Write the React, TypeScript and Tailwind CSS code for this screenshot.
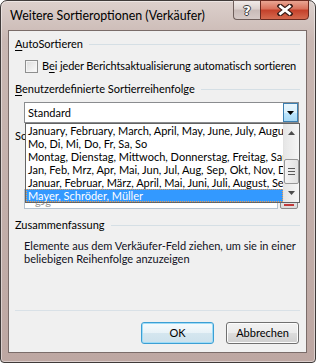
import React from "react";

const font = { fontFamily: 'Lato, "Noto Sans", sans-serif' };

function SectionHeader({ children }: { children: React.ReactNode }) {
  return (
    <div className="flex items-center h-[14px] gap-[6px]">
      <span className="whitespace-nowrap leading-[14px]">{children}</span>
      <div className="flex-1 h-px bg-[#d5dfe5]" />
    </div>
  );
}

export default function App() {
  const items = [
    "January, February, March, April, May, June, July, August",
    "Mo, Di, Mi, Do, Fr, Sa, So",
    "Montag, Dienstag, Mittwoch, Donnerstag, Freitag, Samstag",
    "Jan, Feb, Mrz, Apr, Mai, Jun, Jul, Aug, Sep, Okt, Nov, Dez",
    "Januar, Februar, März, April, Mai, Juni, Juli, August, September",
  ];
  return (
    <div
      className="w-[316px] h-[363px] text-[11px] text-black select-none overflow-hidden"
      style={font}
    >
      <div className="relative w-[316px] h-[363px] rounded-t-[7px] rounded-b-[4px] border border-[#3f3a39] bg-[linear-gradient(#dcd0cc,#c9b7b2_40px,#bda7a2)] shadow-[inset_0_0_0_1px_rgba(255,255,255,0.45)] flex flex-col">
        {/* Title bar */}
        <div className="h-[29px] flex items-start justify-between pl-[9px] pr-[6px]">
          <div className="mt-[7px] leading-[16px] text-[12.4px] text-black whitespace-nowrap">
            Weitere Sortieroptionen (Verkäufer)
          </div>
          <div className="flex -mt-px">
            <div className="w-[27px] h-[20px] rounded-bl-[4px] border border-[#6f5f5b] border-r-0 bg-[linear-gradient(#f1ebe9,#dcd1ce_45%,#c9bbb8_50%,#d6cac7)] flex items-center justify-center">
              <span
                className="text-white font-bold text-[13px] leading-none"
                style={{
                  fontFamily: '"DejaVu Sans", sans-serif',
                  textShadow:
                    "1px 0 0 #3b3b3b,-1px 0 0 #3b3b3b,0 1px 0 #3b3b3b,0 -1px 0 #3b3b3b",
                }}
              >
                ?
              </span>
            </div>
            <div className="w-[49px] h-[20px] rounded-br-[4px] border border-[#6b2a20] bg-[linear-gradient(#e9a593,#d8705a_45%,#c4402a_50%,#d56a4f)] flex items-center justify-center">
              <svg width="16" height="12" viewBox="0 0 16 12">
                <path d="M3 2 L13 10 M13 2 L3 10" stroke="#3a1d18" strokeWidth="5" strokeLinecap="square" />
                <path d="M3.5 2.5 L12.5 9.5 M12.5 2.5 L3.5 9.5" stroke="#ffffff" strokeWidth="2.8" strokeLinecap="square" />
              </svg>
            </div>
          </div>
        </div>

        {/* Client area */}
        <div className="relative ml-[7px] mr-[8px] h-[323px] border border-[#7a6c69] bg-[#f0f0f0] px-[6px] pt-[6px]">
          <SectionHeader>
            <span className="underline underline-offset-[2px]">A</span>utoSortieren
          </SectionHeader>

          {/* checkbox row */}
          <div className="flex items-center h-[14px] mt-[8px] pl-[10px] gap-[3px]">
            <div className="shrink-0 w-[13px] h-[13px] border border-[#8e8f8f] bg-[linear-gradient(135deg,#dcdcdc,#fcfcfc)] shadow-[inset_0_0_0_1px_#f4f4f4]" />
            <span className="whitespace-nowrap leading-[14px] ml-[1px] tracking-[-0.1px]">
              B<span className="underline underline-offset-[2px]">e</span>i jeder Berichtsaktualisierung automatisch sortieren
            </span>
          </div>

          <div className="mt-[9px]">
            <SectionHeader>
              <span className="underline underline-offset-[2px]">B</span>enutzerdefinierte Sortierreihenfolge
            </SectionHeader>
          </div>

          {/* combobox */}
          <div className="ml-[9px] mt-[6px] w-[275px] h-[21px] border border-[#8a8c8f] bg-white flex items-center">
            <span className="pl-[3px] flex-1 leading-[14px]">Standard</span>
            <div className="w-[15px] h-[19px] mr-0 border border-[#3c7fb1] bg-[linear-gradient(#eaf6fd,#d9f0fc_50%,#bee6fd_50%,#a7d9f5)] flex items-center justify-center">
              <svg width="7" height="4" viewBox="0 0 7 4">
                <path d="M0 0 H7 L3.5 4 Z" fill="#000" />
              </svg>
            </div>
          </div>

          {/* hidden content under list */}
          <div className="mt-[6px] h-[14px] leading-[14px] whitespace-nowrap">Sortieren nach</div>
          <div className="flex mt-[46px] gap-[2px] ml-[9px]">
            <div className="w-[254px] h-[20px] border border-[#b4c2d0] bg-white overflow-hidden">
              <span className="text-[#9a9a9a] pl-[10px] leading-[21px]">gJg</span>
            </div>
            <div className="w-[18px] h-[20px] border border-[#8a8a8a] rounded-[2px] bg-[linear-gradient(#f2f2f2,#dcdcdc)] flex items-end justify-center">
              <div className="w-[10px] h-[2px] bg-[#c23a3a] mb-[2px]" />
            </div>
          </div>

          <div className="mt-[9px]">
            <SectionHeader>Zusammenfassung</SectionHeader>
          </div>

          <div className="mt-[7px] pl-[9px] leading-[13px] text-[#111122]">
            <div className="whitespace-nowrap">Elemente aus dem Verkäufer-Feld ziehen, um sie in einer</div>
            <div className="whitespace-nowrap">beliebigen Reihenfolge anzuzeigen</div>
          </div>

          <div className="mt-[45px] h-px bg-[#d9e1e7]" />

          <div className="flex justify-end gap-[12px] mt-[11px] pr-px">
            <div className="w-[73px] h-[22px] rounded-[3px] border border-[#3c9fd4] bg-[linear-gradient(#f6fbfd,#e8f2f7_50%,#d5e6ef_50%,#cde1ec)] shadow-[inset_0_0_0_1px_#9fdcf7] flex items-center justify-center">
              OK
            </div>
            <div className="w-[73px] h-[22px] rounded-[3px] border border-[#707070] bg-[linear-gradient(#f2f2f2,#ebebeb_50%,#dddddd_50%,#cfcfcf)] shadow-[inset_0_0_0_1px_#fcfcfc] flex items-center justify-center">
              Abbrechen
            </div>
          </div>

          {/* dropdown list overlay */}
          <div className="absolute left-[16px] top-[92px] w-[275px] h-[80px] border border-[#646464] bg-white flex">
            <div className="flex-1 min-w-0 overflow-hidden">
              {items.map((t) => (
                <div key={t} className="h-[13px] leading-[13px] pl-[2px] whitespace-nowrap">
                  {t}
                </div>
              ))}
              <div className="h-[13px] leading-[11px] pl-[1px] whitespace-nowrap bg-[#3399ff] text-white border border-dotted border-[#f0a050]">
                Mayer, Schröder, Müller
              </div>
            </div>
            <div className="shrink-0 w-[16px] bg-[linear-gradient(90deg,#e6e6e6,#f6f6f6)] border-l border-[#e3e3e3] flex flex-col items-center">
              <div className="h-[17px] flex items-center justify-center">
                <svg width="7" height="4" viewBox="0 0 7 4">
                  <path d="M0 4 H7 L3.5 0 Z" fill="#4d4d4d" />
                </svg>
              </div>
              <div className="mt-[18px] w-[15px] h-[25px] rounded-[2px] border border-[#979797] bg-[linear-gradient(90deg,#f3f3f3,#e2e2e2)] flex flex-col items-center justify-center gap-[2px]">
                <div className="w-[7px] h-px bg-[#5a5a5a]" />
                <div className="w-[7px] h-px bg-[#5a5a5a]" />
                <div className="w-[7px] h-px bg-[#5a5a5a]" />
              </div>
              <div className="flex-1 flex items-center justify-center">
                <svg width="7" height="4" viewBox="0 0 7 4">
                  <path d="M0 0 H7 L3.5 4 Z" fill="#4d4d4d" />
                </svg>
              </div>
            </div>
          </div>
        </div>
      </div>
    </div>
  );
}
